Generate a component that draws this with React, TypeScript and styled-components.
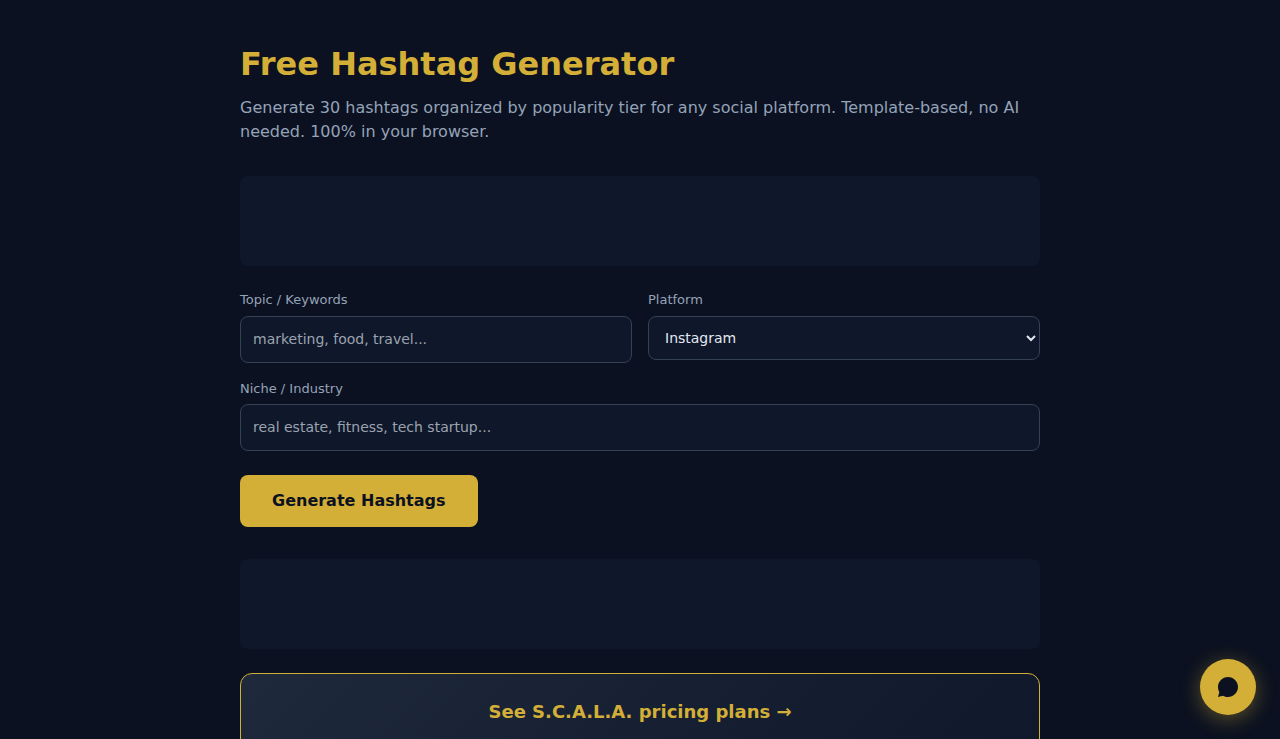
import React from "react";
import styled, { createGlobalStyle } from "styled-components";

const GlobalStyle = createGlobalStyle`
  *, *::before, *::after { box-sizing: border-box; }
  html, body { margin: 0; padding: 0; }
  body {
    background: #0b1120;
    color: #e2e8f0;
    font-family: "DejaVu Sans", sans-serif;
    line-height: 1.5;
    height: 739px;
    overflow: hidden;
  }
`;

const Page = styled.main`
  width: 800px;
  margin: 0 auto;
  padding-top: 40px;
`;

const Title = styled.h1`
  margin: 0 0 8px;
  color: #d4af37;
  font-size: 32px;
  font-weight: 700;
  line-height: 48px;
`;

const Subtitle = styled.p`
  margin: 0 0 32px;
  color: #94a3b8;
  font-size: 16px;
  line-height: 24px;
`;

const AdSlot = styled.div`
  height: 90px;
  margin: 0 0 24px;
  border-radius: 8px;
  background: #0f172a;
`;

const FormGrid = styled.div`
  display: grid;
  grid-template-columns: 1fr 1fr;
  gap: 16px;
`;

const Field = styled.div<{ $wide?: boolean }>`
  grid-column: ${(p) => (p.$wide ? "1 / -1" : "auto")};
`;

const Label = styled.label`
  display: block;
  margin-bottom: 6px;
  color: #94a3b8;
  font-size: 13px;
  line-height: 19.5px;
`;

const Input = styled.input`
  display: block;
  width: 100%;
  padding: 12px;
  border: 1px solid #334155;
  border-radius: 8px;
  background: #0f172a;
  color: #e2e8f0;
  font: 14px/21px "DejaVu Sans", sans-serif;

  &::placeholder { color: #9ca3af; }
`;

const Select = styled.select`
  display: block;
  width: 100%;
  height: 44px;
  padding: 12px;
  border: 1px solid #334155;
  border-radius: 8px;
  background: #0f172a;
  color: #e2e8f0;
  font: 14px "DejaVu Sans", sans-serif;
`;

const GenerateButton = styled.button`
  display: block;
  margin: 24px 0 32px;
  padding: 14px 32px;
  border: 0;
  border-radius: 8px;
  background: #d4af37;
  color: #0b1120;
  font: 700 16px/24px "DejaVu Sans", sans-serif;
  cursor: pointer;
`;

const PlanCard = styled.section`
  height: 130px;
  padding: 24px;
  border: 1px solid #d4af37;
  border-radius: 12px;
  background: linear-gradient(135deg, #1e293b, #0f172a);
  text-align: center;
`;

const PlanLink = styled.a`
  color: #d4af37;
  font-size: 18px;
  font-weight: 700;
  line-height: 27px;
  text-decoration: none;
`;

const ChatButton = styled.button`
  position: fixed;
  right: 24px;
  bottom: 24px;
  display: flex;
  align-items: center;
  justify-content: center;
  width: 56px;
  height: 56px;
  padding: 0;
  border: 0;
  border-radius: 50%;
  background: #d4af37;
  color: #0b1120;
  box-shadow: 0 4px 20px rgba(212, 175, 55, 0.4);
  cursor: pointer;
`;

export default function App() {
  return (
    <>
      <GlobalStyle />
      <Page>
        <Title>Free Hashtag Generator</Title>
        <Subtitle>
          Generate 30 hashtags organized by popularity tier for any social
          platform. Template-based, no AI needed. 100% in your browser.
        </Subtitle>
        <AdSlot />
        <FormGrid>
          <Field>
            <Label htmlFor="topic">Topic / Keywords</Label>
            <Input id="topic" placeholder="marketing, food, travel..." />
          </Field>
          <Field>
            <Label htmlFor="platform">Platform</Label>
            <Select id="platform">
              <option>Instagram</option>
            </Select>
          </Field>
          <Field $wide>
            <Label htmlFor="niche">Niche / Industry</Label>
            <Input id="niche" placeholder="real estate, fitness, tech startup..." />
          </Field>
        </FormGrid>
        <GenerateButton>Generate Hashtags</GenerateButton>
        <AdSlot />
        <PlanCard>
          <PlanLink href="#">See S.C.A.L.A. pricing plans →</PlanLink>
        </PlanCard>
      </Page>
      <ChatButton aria-label="Open chat">
        <svg width="24" height="24" viewBox="0 0 24 24" fill="currentColor">
          <path d="M12 2C6.48 2 2 6.48 2 12c0 1.85.5 3.58 1.36 5.07L2 22l4.93-1.36C8.42 21.5 10.15 22 12 22c5.52 0 10-4.48 10-10S17.52 2 12 2z" />
        </svg>
      </ChatButton>
    </>
  );
}
